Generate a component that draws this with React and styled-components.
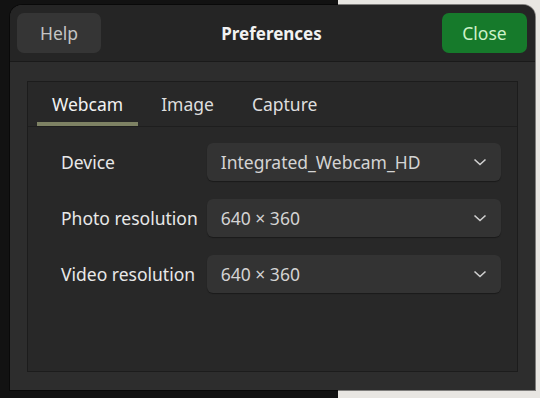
import React from 'react'
import styled, {createGlobalStyle} from 'styled-components'

const Global = createGlobalStyle`
  html, body {
    margin: 0;
    padding: 0;
  }
  body {
    width: 540px;
    height: 398px;
    overflow: hidden;
    font-family: "Noto Sans", "Open Sans", sans-serif;
    background: linear-gradient(to right, #121212 338px, #e8e6e2 338px);
  }
`

const Dialog = styled.div`
  margin: 5px 0 0 10px;
  width: 525px;
  height: 385px;
  display: flex;
  flex-direction: column;
  border-radius: 12px 12px 0 0;
  overflow: hidden;
  background: #2d2d2d;
  box-shadow: 0 0 0 1px rgba(0, 0, 0, 0.45);
`

const Header = styled.div`
  height: 56px;
  flex: none;
  display: flex;
  align-items: center;
  justify-content: space-between;
  padding: 0 8px 0 7px;
  background: #252525;
  border-bottom: 1px solid #1a1a1a;
`

const Title = styled.div`
  font-size: 17px;
  font-weight: 700;
  color: #f2f2f2;
`

const HeaderButton = styled.button`
  height: 40px;
  width: ${props => props.primary ? '85px' : '84px'};
  border: none;
  border-radius: 7px;
  font-family: inherit;
  font-size: 17.5px;
  background: ${props => props.primary ? '#167a2b' : '#353535'};
  color: ${props => props.primary ? '#cdf1c8' : '#c4c4c4'};
  padding: 0;
`

const Body = styled.div`
  flex: 1;
  padding: 19px 17px 18px 17px;
  display: flex;
`

const Notebook = styled.div`
  flex: 1;
  display: flex;
  flex-direction: column;
  border: 1px solid #1c1c1c;
  background: #282828;
`

const TabStrip = styled.div`
  height: 44px;
  display: flex;
  gap: 8px;
  padding-left: 9px;
  border-bottom: 1px solid #1e1e1e;
`

const Tab = styled.div`
  display: flex;
  align-items: center;
  padding: 0 15px;
  font-size: 17.5px;
  color: ${props => props.active ? '#f2f2f2' : '#dedede'};
  border-bottom: 4px solid ${props => props.active ? '#7e8264' : 'transparent'};
  padding-top: 4px;
`

const Form = styled.div`
  display: grid;
  grid-template-columns: max-content 1fr;
  column-gap: 9px;
  row-gap: 18px;
  align-items: center;
  padding: 16px 16px 0 33px;
`

const Label = styled.div`
  font-size: 17.5px;
  color: #e8e8e8;
`

const Combo = styled.div`
  height: 38px;
  display: flex;
  align-items: center;
  justify-content: space-between;
  padding: 0 14px;
  border-radius: 6px;
  background: #333333;
  box-shadow: 0 1px 1px rgba(0, 0, 0, 0.35);
  font-size: 17.5px;
  color: #d4d4d4;
`

const Chevron = () => (
  <svg width="14" height="8" viewBox="0 0 14 8">
    <path d="M1.5 1.5 L7 6.5 L12.5 1.5" fill="none" stroke="#d0d0d0" strokeWidth="1.6" />
  </svg>
)

const rows = [
  {label: 'Device', value: 'Integrated_Webcam_HD'},
  {label: 'Photo resolution', value: '640 × 360'},
  {label: 'Video resolution', value: '640 × 360'},
]

export default function App() {
  return (
    <>
      <Global />
      <Dialog>
        <Header>
          <HeaderButton>Help</HeaderButton>
          <Title>Preferences</Title>
          <HeaderButton primary>Close</HeaderButton>
        </Header>
        <Body>
          <Notebook>
            <TabStrip>
              <Tab active>Webcam</Tab>
              <Tab>Image</Tab>
              <Tab>Capture</Tab>
            </TabStrip>
            <Form>
              {rows.map(row => (
                <React.Fragment key={row.label}>
                  <Label>{row.label}</Label>
                  <Combo>
                    <span>{row.value}</span>
                    <Chevron />
                  </Combo>
                </React.Fragment>
              ))}
            </Form>
          </Notebook>
        </Body>
      </Dialog>
    </>
  )
}
